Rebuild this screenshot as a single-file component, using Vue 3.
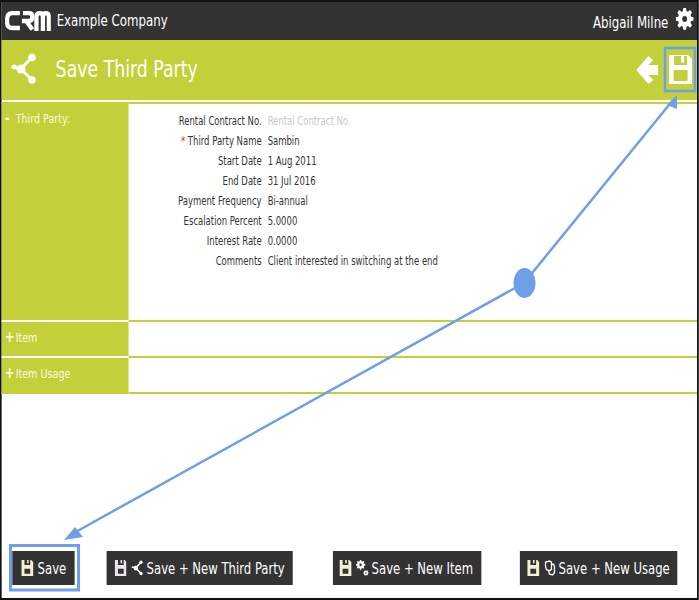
<script setup>
const fields = [
  { label: 'Rental Contract No.', value: 'Rental Contract No.', placeholder: true },
  { label: 'Third Party Name', value: 'Sambin', required: true },
  { label: 'Start Date', value: '1 Aug 2011' },
  { label: 'End Date', value: '31 Jul 2016' },
  { label: 'Payment Frequency', value: 'Bi-annual' },
  { label: 'Escalation Percent', value: '5.0000' },
  { label: 'Interest Rate', value: '0.0000' },
  { label: 'Comments', value: 'Client interested in switching at the end' },
]
const floppy = 'M0 0H19L23 4V29H0Z M5 1V10H18V1H15V7.500H12V1Z M4.500 15H18.500V26H4.500Z'
const floppySmall = 'M0 0H19L23 4V29H0Z M6 0V9H17V0H14V6H11V0Z M6 16H17V25H6Z'
const gear = 'M6.800 0h2.400l.4 2.200 1.300.5L12.800 1.400l1.700 1.700-1.300 1.900.6 1.300 2.200.4v2.400l-2.200.4-.6 1.300 1.300 1.900-1.700 1.700-1.900-1.300-1.300.6-.4 2.200H6.800l-.4-2.200-1.300-.6-1.900 1.300-1.700-1.700 1.300-1.900-.6-1.300L0 9.200V6.800l2.200-.4.6-1.300-1.300-1.900 1.700-1.700 1.900 1.300 1.300-.5zM8 5.800a2.200 2.200 0 1 0 0 4.400 2.200 2.200 0 0 0 0-4.400z'
</script>

<template>
  <div class="frame">
    <div class="page">
      <header class="top">
        <div class="brand">
          <svg class="logo" viewBox="0 0 46 20" preserveAspectRatio="none" fill="none" stroke="#fff" stroke-width="4.300">
            <path d="M15 2.200H7.500Q2.200 2.200 2.200 8V11.500Q2.200 17 7.500 17H15" />
            <path d="M17 10H24Q27.500 10 27.500 6Q27.500 2.200 24 2.200H18" />
            <path d="M22 11L27.500 18.500" />
            <path d="M31.500 20V6Q31.500 2.200 35 2.200Q38 2.200 38 6V20M38 6Q38 2.200 41 2.200Q44 2.200 44 6V20" />
          </svg>
          <span class="company">Example Company</span>
        </div>
        <div class="user">
          <span>Abigail Milne</span>
          <svg class="gear" viewBox="0 0 16 16" preserveAspectRatio="none"><path :d="gear" fill="#fff" fill-rule="evenodd" /></svg>
        </div>
      </header>

      <section class="titlebar">
        <svg class="share" viewBox="0 0 28 32" preserveAspectRatio="none">
          <g stroke="#fff" stroke-width="3" fill="#fff">
            <path d="M12 16L23 4M12 16L23 27M12 16L5 14" />
            <circle cx="12" cy="16" r="4.500" stroke="none" />
            <circle cx="23" cy="4.500" r="3.800" stroke="none" />
            <circle cx="23" cy="27" r="3.800" stroke="none" />
            <circle cx="5" cy="14" r="2.500" stroke="none" />
          </g>
        </svg>
        <h1>Save Third Party</h1>
        <svg class="back" viewBox="0 0 22 28" preserveAspectRatio="none"><path d="M0 14L12 0 17 4 12 9H22V19H12L17 24 12 28Z" fill="#fff" /></svg>
        <svg class="save-top" viewBox="0 0 23 29" preserveAspectRatio="none"><path :d="floppy" fill="#fff" fill-rule="evenodd" /></svg>
      </section>

      <section class="row row-main">
        <div class="side"><span class="sign">-</span>Third Party:</div>
        <div class="body">
          <div class="form">
            <template v-for="f in fields" :key="f.label">
              <div class="lbl"><span v-if="f.required" class="req">* </span>{{ f.label }}</div>
              <div class="val" :class="{ ph: f.placeholder }">{{ f.value }}</div>
            </template>
          </div>
        </div>
      </section>
      <section class="row">
        <div class="side"><span class="sign">+</span>Item</div>
        <div class="body"></div>
      </section>
      <section class="row row-last">
        <div class="side"><span class="sign">+</span>Item Usage</div>
        <div class="body"></div>
      </section>

      <footer class="actions">
        <button class="btn b1">
          <svg class="ic fl" viewBox="0 0 23 29" preserveAspectRatio="none"><path :d="floppySmall" fill="#f4f0d0" fill-rule="evenodd" /></svg>Save
        </button>
        <button class="btn b2">
          <svg class="ic fl" viewBox="0 0 23 29" preserveAspectRatio="none"><path :d="floppySmall" fill="#ece4f4" fill-rule="evenodd" /></svg>
          <svg class="ic sh" viewBox="0 0 28 32" preserveAspectRatio="none">
            <g stroke="#fff" stroke-width="3.500" fill="#fff">
              <path d="M12 16L23 4M12 16L23 27M12 16L3 14" />
              <circle cx="12" cy="16" r="5" stroke="none" />
              <circle cx="23" cy="4.500" r="3.500" stroke="none" />
              <circle cx="23" cy="27" r="3.500" stroke="none" />
            </g>
          </svg>Save + New Third Party
        </button>
        <button class="btn b3">
          <svg class="ic fl" viewBox="0 0 23 29" preserveAspectRatio="none"><path :d="floppySmall" fill="#f4f0d0" fill-rule="evenodd" /></svg>
          <svg class="ic sh" viewBox="0 0 16 19" preserveAspectRatio="none">
            <path transform="scale(.72)" :d="gear" fill="#fff" fill-rule="evenodd" />
            <path transform="translate(9 12) scale(.42)" :d="gear" fill="#fff" fill-rule="evenodd" />
          </svg>Save + New Item
        </button>
        <button class="btn b4">
          <svg class="ic fl" viewBox="0 0 23 29" preserveAspectRatio="none"><path :d="floppySmall" fill="#f4f0d0" fill-rule="evenodd" /></svg>
          <svg class="ic doc" viewBox="0 0 11 15" preserveAspectRatio="none" fill="none" stroke="#fff" stroke-width="1.300">
            <path d="M1 2L5 1 7 2V9L5 10 2 9 1 6Z" />
            <path d="M7 4H9L10 6V12L8 14 5 13 4 10" />
          </svg>Save + New Usage
        </button>
      </footer>
    </div>

    <svg class="overlay" viewBox="0 0 699 600" width="699" height="600">
      <g stroke="#6f9fe8" fill="none">
        <path d="M524 283L673 100M524 283L72 534" stroke-width="2.500" />
        <rect x="10.500" y="545.500" width="68" height="44.500" stroke-width="3" />
        <rect x="665" y="48" width="30" height="43" stroke-width="2.500" />
      </g>
      <path d="M677 95L667 105 677 109Z" fill="#6f9fe8" />
      <path d="M64 540L75 527 83 537Z" fill="#6f9fe8" />
      <ellipse cx="524.500" cy="283" rx="11" ry="15" fill="#6f9fe8" />
    </svg>
  </div>
</template>

<style scoped>
.frame {
  --sx: 0.82;
  --green: #c3d03a;
  position: relative;
  width: 699px;
  height: 600px;
  overflow: hidden;
  background: #111;
}
.page {
  width: calc(699px / var(--sx));
  height: 600px;
  box-sizing: border-box;
  border-style: solid;
  border-color: #111;
  border-width: 2px calc(2px / var(--sx)) 2px calc(2px / var(--sx));
  background: #fff;
  display: flex;
  flex-direction: column;
  transform: scaleX(var(--sx));
  transform-origin: 0 0;
  font-family: "DejaVu Sans", Tahoma, sans-serif;
  font-stretch: condensed;
  color: #333;
}
.top {
  height: 38px;
  flex: none;
  background: #333;
  color: #fff;
  display: flex;
  justify-content: space-between;
  align-items: center;
  padding: 0 calc(4px / var(--sx)) 0 calc(3px / var(--sx));
}
.brand { display: flex; align-items: center; }
.logo { width: calc(46px / var(--sx)); height: 20px; margin-right: calc(6px / var(--sx)); }
.company { font-size: 16px; margin-top: -2px; }
.user { display: flex; align-items: center; font-size: 16px; }
.user span { margin-top: 2px; }
.gear { width: calc(18px / var(--sx)); height: 22px; margin-left: calc(7px / var(--sx)); margin-top: -4px; }
.titlebar {
  height: 60px;
  flex: none;
  background: var(--green);
  display: flex;
  align-items: center;
  padding: 0 calc(5px / var(--sx)) 0 calc(7px / var(--sx));
  color: #fff;
}
.share { width: calc(28px / var(--sx)); height: 32px; flex: none; margin-bottom: 3px; }
h1 {
  margin: 0 0 2px calc(19px / var(--sx));
  font-size: 23.500px;
  font-weight: 400;
  flex: 1;
}
.back { width: calc(22px / var(--sx)); height: 28px; margin-right: calc(11px / var(--sx)); }
.save-top { width: calc(23px / var(--sx)); height: 29px; margin-bottom: 1px; }
.row { display: flex; flex: none; height: 36px; }
.row-main { height: 220px; margin-top: 2px; }
.side {
  width: calc(127px / var(--sx));
  flex: none;
  box-sizing: border-box;
  background: var(--green);
  color: #fbfbe0;
  font-size: 13px;
  padding: 8px 0 0 calc(3px / var(--sx));
  border-bottom: 2px solid #fff;
  display: flex;
  align-items: baseline;
}
.row-main .side { border-top: 2px solid var(--green); padding-top: 7px; }
.row-last .side { border-bottom-color: var(--green); }
.sign {
  width: calc(11px / var(--sx));
  flex: none;
  font-size: 16px;
  font-weight: 700;
  line-height: 14px;
}
.body { flex: 1; background: #fff; border-bottom: 2px solid var(--green); }
.row-main .body { border-top: 2px solid var(--green); }
.form {
  display: grid;
  grid-template-columns: calc(133px / var(--sx)) 1fr;
  column-gap: calc(6px / var(--sx));
  grid-auto-rows: 20px;
  padding-top: 7px;
  font-size: 11.500px;
  line-height: 20px;
}
.lbl { text-align: right; color: #333; }
.ph { color: #c9c9c9; }
.req { color: #d33; }
.actions {
  margin-top: auto;
  margin-bottom: 13px;
  display: flex;
  padding-left: calc(11px / var(--sx));
}
.btn {
  height: 34px;
  box-sizing: border-box;
  border: 0;
  background: #333;
  color: #fff;
  font-family: inherit;
  font-stretch: condensed;
  font-size: 15.800px;
  display: flex;
  align-items: center;
  padding: 0 0 0 calc(8px / var(--sx));
  white-space: nowrap;
}
.ic { flex: none; height: 16px; }
.fl { width: calc(12px / var(--sx)); margin-right: calc(4px / var(--sx)); }
.sh { width: calc(13px / var(--sx)); margin-right: calc(3px / var(--sx)); }
.doc { width: calc(11px / var(--sx)); margin-right: calc(3px / var(--sx)); }
.b1 { width: calc(62px / var(--sx)); padding-left: calc(9px / var(--sx)); }
.b1 .fl { margin-right: calc(4px / var(--sx)); }
.b2 { width: calc(186px / var(--sx)); margin-left: calc(32px / var(--sx)); }
.b3 { width: calc(149px / var(--sx)); margin-left: calc(40px / var(--sx)); padding-left: calc(7px / var(--sx)); }
.b4 { width: calc(158px / var(--sx)); margin-left: calc(38px / var(--sx)); }
.b4 .fl { margin-right: calc(5px / var(--sx)); }
.overlay { position: absolute; left: 0; top: 0; pointer-events: none; }
</style>
